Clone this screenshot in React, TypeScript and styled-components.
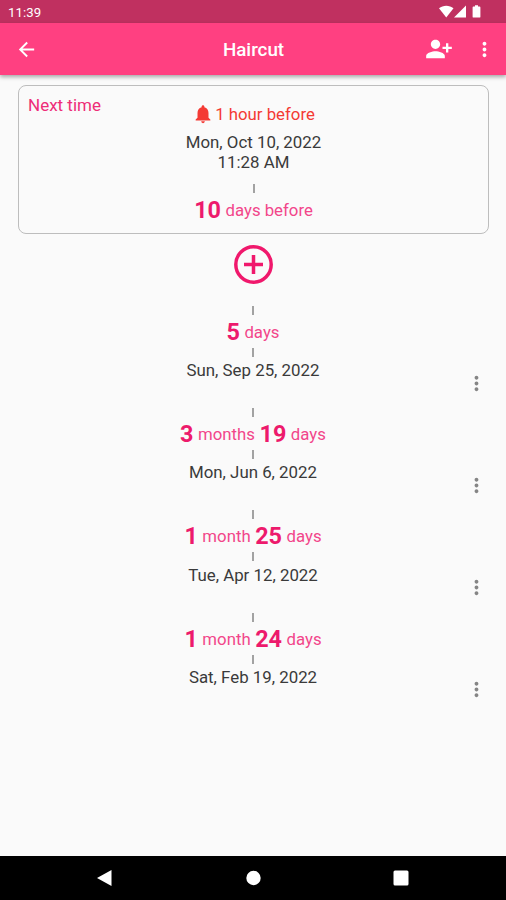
import React from "react";
import styled, { createGlobalStyle } from "styled-components";
import {
  MdArrowBack,
  MdMoreVert,
  MdNotifications,
  MdPersonAddAlt1,
} from "react-icons/md";

const GlobalStyle = createGlobalStyle`
  * { box-sizing: border-box; }
  body { margin: 0; background: #fafafa; font-family: Roboto, sans-serif; }
  svg { display: block; }
  button { border: 0; padding: 0; background: none; color: inherit; font: inherit; }
`;

const Screen = styled.div`
  width: 506px;
  height: 900px;
  display: flex;
  flex-direction: column;
  background: #fafafa;
  color: #3a3a3a;
  overflow: hidden;
`;

const StatusBar = styled.header`
  flex: none;
  height: 23px;
  padding: 1px 24px 0 8px;
  display: flex;
  align-items: center;
  justify-content: space-between;
  background: #c03060;
  color: #fff;
  font-size: 13.2px;
  letter-spacing: 0.1px;
`;

const AppBar = styled.nav`
  flex: none;
  height: 52px;
  padding: 0 10px 0 15px;
  display: grid;
  grid-template-columns: 1fr auto 1fr;
  align-items: center;
  background: #ff4081;
  color: #fff;
  box-shadow: 0 2px 4px rgba(0, 0, 0, 0.34);
`;

const Title = styled.h1`
  margin: 1px 0 0 -4px;
  font-size: 18.8px;
  font-weight: 500;
`;

const Actions = styled.div`
  display: flex;
  justify-content: flex-end;
  align-items: center;
  gap: 20px;
`;

const NextCard = styled.section`
  flex: none;
  height: 149px;
  margin: 10px 17px 0 18px;
  padding: 9px 9px 0;
  display: grid;
  grid-template-columns: 1fr auto 1fr;
  border: 1px solid #bdbdbd;
  border-radius: 8px;
`;

const CardLabel = styled.span`
  height: 20px;
  line-height: 20px;
  font-size: 17px;
  color: #ee2d78;
`;

const Stack = styled.div`
  display: flex;
  flex-direction: column;
  align-items: center;
`;

const Reminder = styled.div`
  height: 20px;
  margin: 9px 0 8px;
  display: flex;
  align-items: center;
  gap: 1px;
  font-size: 16.8px;
  color: #f43a34;
`;

const DateText = styled.div`
  height: 20px;
  line-height: 20px;
  font-size: 16.85px;
  white-space: nowrap;
`;

const Tick = styled.i<{ $before?: number; $after?: number }>`
  width: 2px;
  height: 9px;
  margin: ${(p) => p.$before ?? 0}px 0 ${(p) => p.$after ?? 0}px;
  background: #a2a2a2;
`;

const Duration = styled.div`
  height: 28px;
  display: flex;
  align-items: center;
  gap: 4.5px;
  line-height: 28px;
  font-size: 16.8px;
  color: #f2468a;
  white-space: nowrap;
`;

const Amount = styled.strong`
  font-size: 23.4px;
  font-weight: 700;
  color: #ed1a6c;
`;

const AddButton = styled.button`
  flex: none;
  align-self: center;
  margin-top: 7px;
  height: 47px;
  color: #f0186c;
`;

const History = styled.ul`
  flex: 1;
  margin: 0;
  padding: 18px 0 0;
  list-style: none;
`;

const Entry = styled.li`
  height: 102.2px;
  padding: 0 18px;
  display: grid;
  grid-template-columns: 1fr auto 1fr;
`;

const EntryMenu = styled.button`
  justify-self: end;
  align-self: start;
  margin-top: 65.5px;
  color: #858585;
`;

const NavBar = styled.footer`
  flex: none;
  height: 44px;
  padding: 0 97px;
  display: flex;
  justify-content: space-between;
  align-items: center;
  background: #000;
`;

type Part = [string, string];

const entries: { parts: Part[]; date: string }[] = [
  { parts: [["5", "days"]], date: "Sun, Sep 25, 2022" },
  { parts: [["3", "months"], ["19", "days"]], date: "Mon, Jun 6, 2022" },
  { parts: [["1", "month"], ["25", "days"]], date: "Tue, Apr 12, 2022" },
  { parts: [["1", "month"], ["24", "days"]], date: "Sat, Feb 19, 2022" },
];

function Span({ parts }: { parts: Part[] }) {
  return (
    <Duration>
      {parts.map(([amount, unit]) => (
        <React.Fragment key={unit}>
          <Amount>{amount}</Amount>
          <span>{unit}</span>
        </React.Fragment>
      ))}
    </Duration>
  );
}

export default function App() {
  return (
    <>
      <GlobalStyle />
      <Screen>
        <StatusBar>
          <span>11:39</span>
          <svg width="43" height="14" viewBox="0 0 43 14" fill="#fff">
            <path d="M0 3.2C4-.2 10.500-.2 14.500 3.200L7.250 12.500Z" />
            <path d="M27 .5V12.500H15Z" />
            <path d="M34.500 1.600H36V.2h3v1.400h1.500q.9 0 .9.900v9.200q0 .9-.9.900h-6q-.9 0-.9-.9V2.500q0-.9.900-.9Z" />
          </svg>
        </StatusBar>
        <AppBar>
          <button aria-label="Back"><MdArrowBack size={23} /></button>
          <Title>Haircut</Title>
          <Actions>
            <button aria-label="Add person"><MdPersonAddAlt1 size={28} /></button>
            <button aria-label="More"><MdMoreVert size={23} /></button>
          </Actions>
        </AppBar>
        <NextCard>
          <CardLabel>Next time</CardLabel>
          <Stack>
            <Reminder>
              <MdNotifications size={22} />
              <span>1 hour before</span>
            </Reminder>
            <DateText>Mon, Oct 10, 2022</DateText>
            <DateText>11:28 AM</DateText>
            <Tick $before={12} $after={3} />
            <Span parts={[["10", "days before"]]} />
          </Stack>
        </NextCard>
        <AddButton aria-label="Add">
          <svg width="47" height="47" viewBox="0 0 47 47" fill="none" stroke="currentColor" strokeWidth="3.5">
            <circle cx="23.500" cy="23.500" r="17.700" />
            <path d="M23.500 14v19M14 23.500h19" />
          </svg>
        </AddButton>
        <History>
          {entries.map(({ parts, date }) => (
            <Entry key={date}>
              <span />
              <Stack>
                <Tick $after={3} />
                <Span parts={parts} />
                <Tick $before={2} $after={3.2} />
                <DateText>{date}</DateText>
              </Stack>
              <EntryMenu aria-label="Entry options"><MdMoreVert size={23} /></EntryMenu>
            </Entry>
          ))}
        </History>
        <NavBar>
          <svg width="15" height="18" viewBox="0 0 15 18"><path d="M0 9 14.500 1v16Z" fill="#fff" /></svg>
          <svg width="17" height="16" viewBox="0 0 17 16"><circle cx="9.500" cy="8" r="7.200" fill="#fff" /></svg>
          <svg width="16" height="16" viewBox="0 0 16 16"><rect x=".5" y=".5" width="15" height="15" rx="1.500" fill="#fff" /></svg>
        </NavBar>
      </Screen>
    </>
  );
}
